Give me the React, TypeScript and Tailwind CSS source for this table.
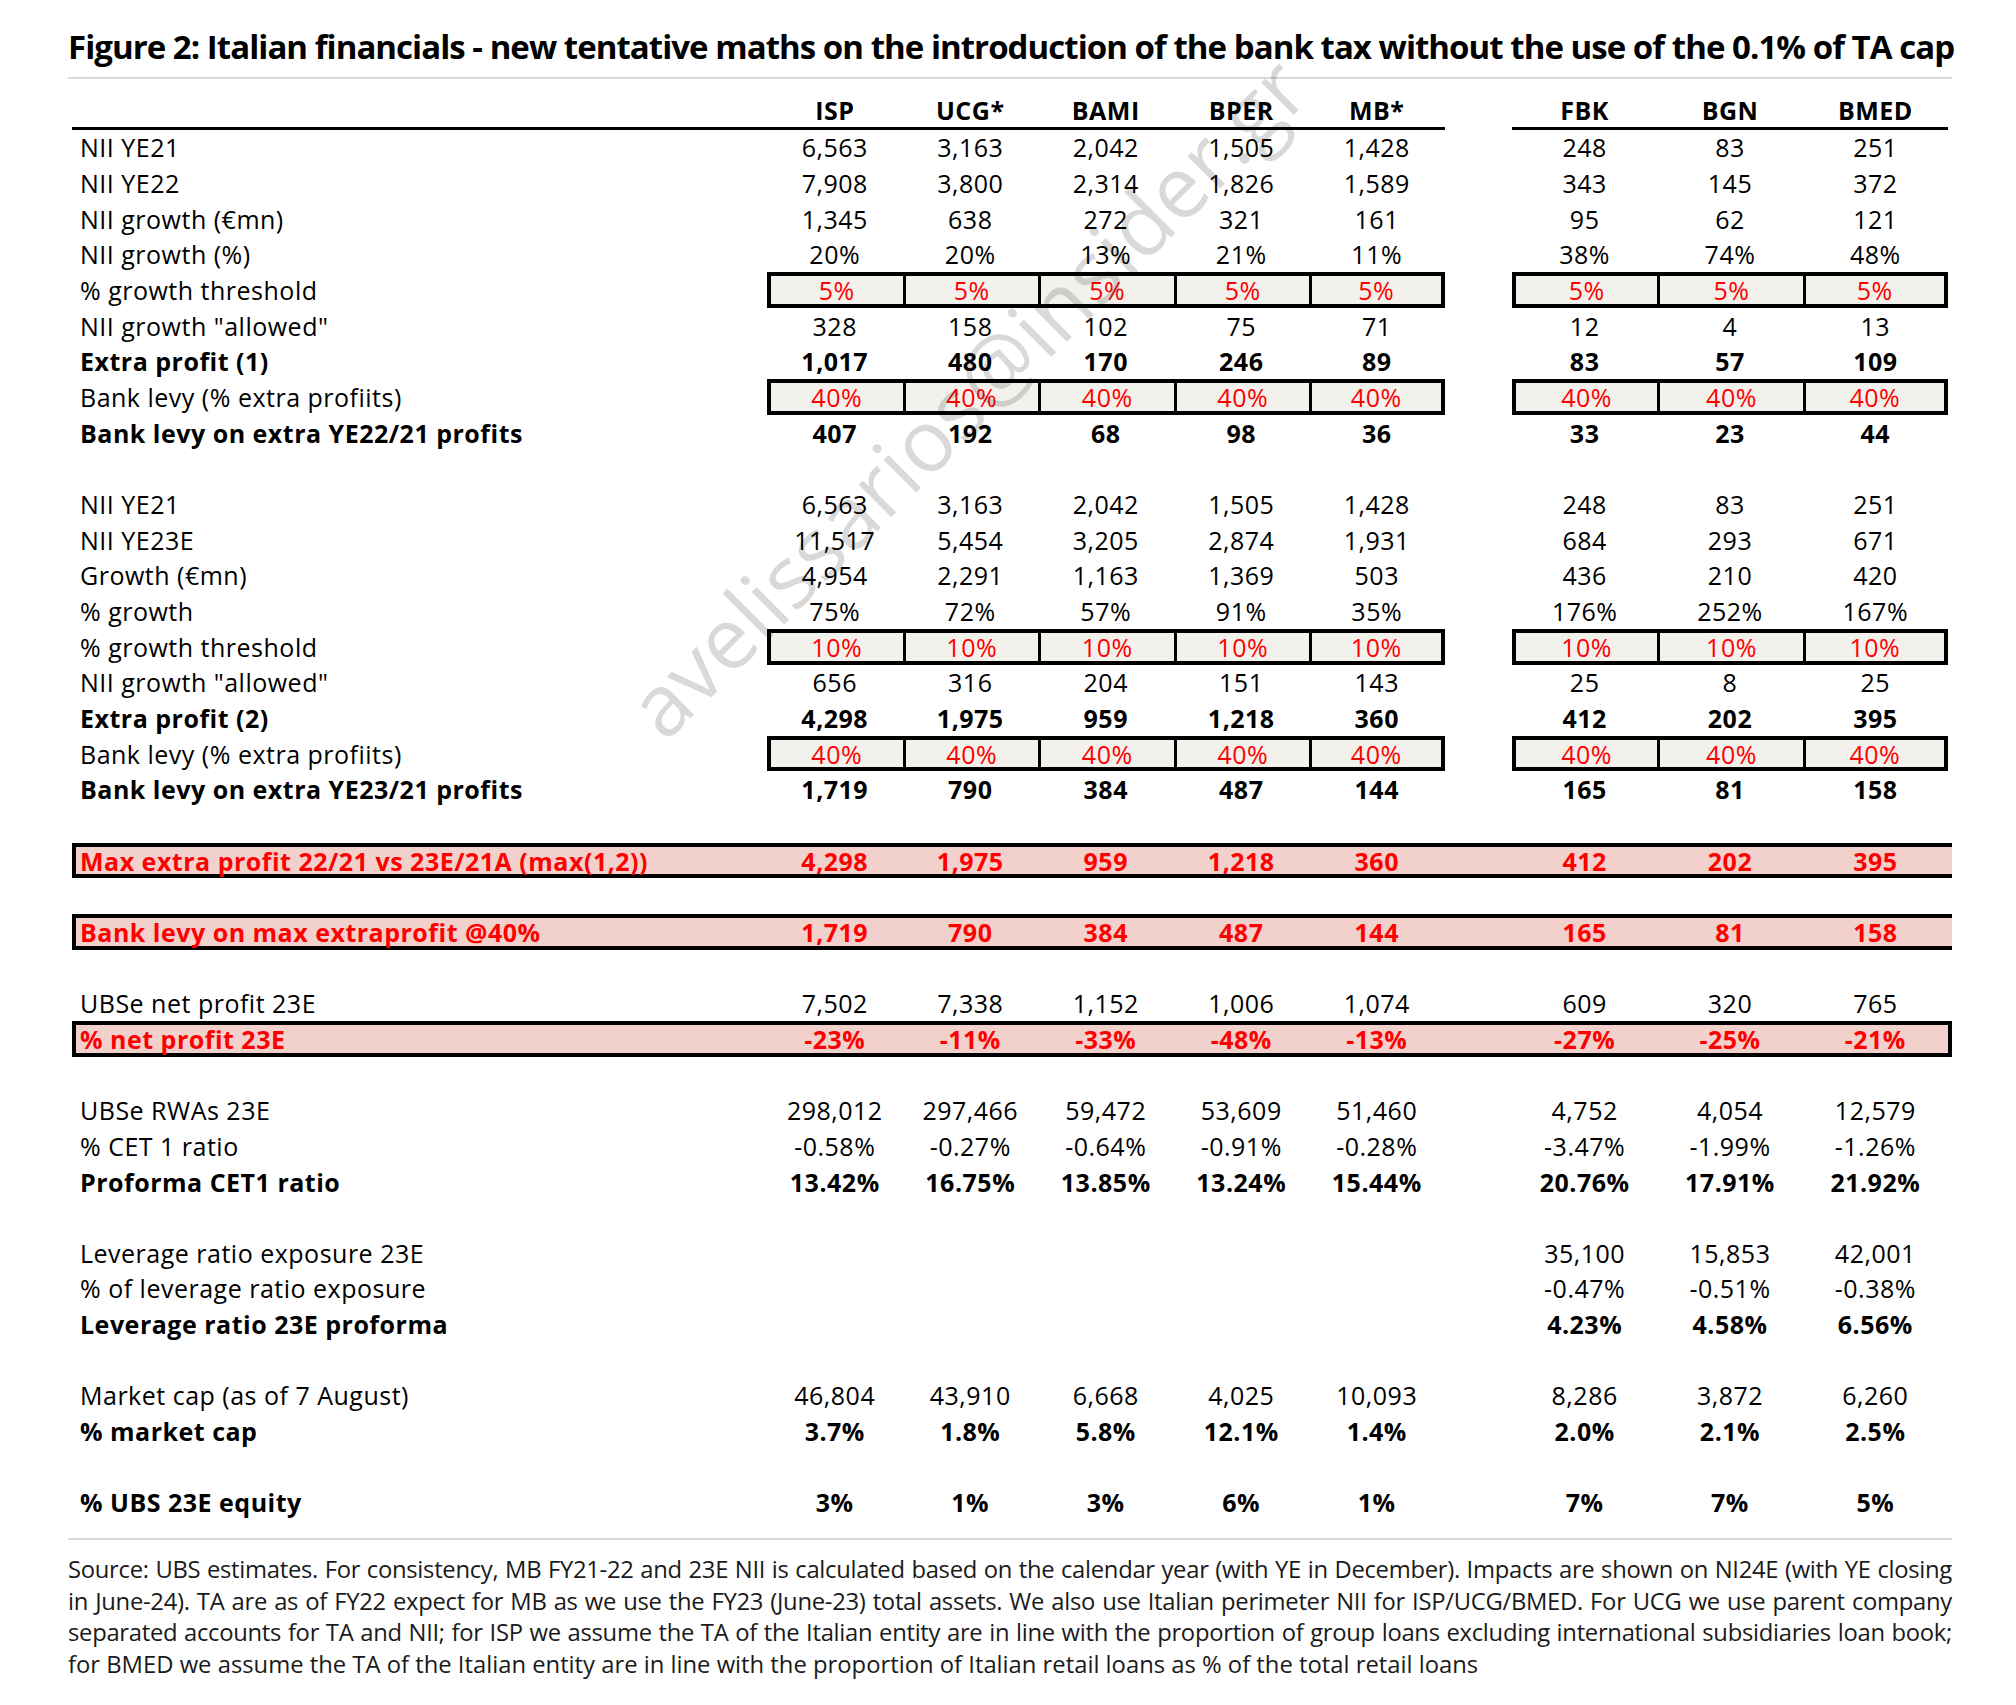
import React from "react";

type Kind = "normal" | "bold" | "input" | "blank" | "hl" | "hlbox";

type Row = {
  label?: string;
  left?: string[];
  right?: string[];
  kind: Kind;
};

const leftHeads = ["ISP", "UCG*", "BAMI", "BPER", "MB*"];
const rightHeads = ["FBK", "BGN", "BMED"];

const rows: Row[] = [
  { label: "NII YE21", left: ["6,563", "3,163", "2,042", "1,505", "1,428"], right: ["248", "83", "251"], kind: "normal" },
  { label: "NII YE22", left: ["7,908", "3,800", "2,314", "1,826", "1,589"], right: ["343", "145", "372"], kind: "normal" },
  { label: "NII growth (€mn)", left: ["1,345", "638", "272", "321", "161"], right: ["95", "62", "121"], kind: "normal" },
  { label: "NII growth (%)", left: ["20%", "20%", "13%", "21%", "11%"], right: ["38%", "74%", "48%"], kind: "normal" },
  { label: "% growth threshold", left: ["5%", "5%", "5%", "5%", "5%"], right: ["5%", "5%", "5%"], kind: "input" },
  { label: 'NII growth  "allowed"', left: ["328", "158", "102", "75", "71"], right: ["12", "4", "13"], kind: "normal" },
  { label: "Extra profit (1)", left: ["1,017", "480", "170", "246", "89"], right: ["83", "57", "109"], kind: "bold" },
  { label: "Bank levy (% extra profiits)", left: ["40%", "40%", "40%", "40%", "40%"], right: ["40%", "40%", "40%"], kind: "input" },
  { label: "Bank levy on extra YE22/21 profits", left: ["407", "192", "68", "98", "36"], right: ["33", "23", "44"], kind: "bold" },
  { kind: "blank" },
  { label: "NII YE21", left: ["6,563", "3,163", "2,042", "1,505", "1,428"], right: ["248", "83", "251"], kind: "normal" },
  { label: "NII YE23E", left: ["11,517", "5,454", "3,205", "2,874", "1,931"], right: ["684", "293", "671"], kind: "normal" },
  { label: "Growth (€mn)", left: ["4,954", "2,291", "1,163", "1,369", "503"], right: ["436", "210", "420"], kind: "normal" },
  { label: "% growth", left: ["75%", "72%", "57%", "91%", "35%"], right: ["176%", "252%", "167%"], kind: "normal" },
  { label: "% growth threshold", left: ["10%", "10%", "10%", "10%", "10%"], right: ["10%", "10%", "10%"], kind: "input" },
  { label: 'NII growth  "allowed"', left: ["656", "316", "204", "151", "143"], right: ["25", "8", "25"], kind: "normal" },
  { label: "Extra profit (2)", left: ["4,298", "1,975", "959", "1,218", "360"], right: ["412", "202", "395"], kind: "bold" },
  { label: "Bank levy (% extra profiits)", left: ["40%", "40%", "40%", "40%", "40%"], right: ["40%", "40%", "40%"], kind: "input" },
  { label: "Bank levy on extra YE23/21 profits", left: ["1,719", "790", "384", "487", "144"], right: ["165", "81", "158"], kind: "bold" },
  { kind: "blank" },
  { label: "Max extra profit 22/21 vs 23E/21A (max(1,2))", left: ["4,298", "1,975", "959", "1,218", "360"], right: ["412", "202", "395"], kind: "hl" },
  { kind: "blank" },
  { label: "Bank levy on max extraprofit @40%", left: ["1,719", "790", "384", "487", "144"], right: ["165", "81", "158"], kind: "hl" },
  { kind: "blank" },
  { label: "UBSe net profit 23E", left: ["7,502", "7,338", "1,152", "1,006", "1,074"], right: ["609", "320", "765"], kind: "normal" },
  { label: "% net profit 23E", left: ["-23%", "-11%", "-33%", "-48%", "-13%"], right: ["-27%", "-25%", "-21%"], kind: "hlbox" },
  { kind: "blank" },
  { label: "UBSe RWAs 23E", left: ["298,012", "297,466", "59,472", "53,609", "51,460"], right: ["4,752", "4,054", "12,579"], kind: "normal" },
  { label: "% CET 1 ratio", left: ["-0.58%", "-0.27%", "-0.64%", "-0.91%", "-0.28%"], right: ["-3.47%", "-1.99%", "-1.26%"], kind: "normal" },
  { label: "Proforma CET1 ratio", left: ["13.42%", "16.75%", "13.85%", "13.24%", "15.44%"], right: ["20.76%", "17.91%", "21.92%"], kind: "bold" },
  { kind: "blank" },
  { label: "Leverage ratio exposure 23E", right: ["35,100", "15,853", "42,001"], kind: "normal" },
  { label: "% of leverage ratio exposure", right: ["-0.47%", "-0.51%", "-0.38%"], kind: "normal" },
  { label: "Leverage ratio 23E proforma", right: ["4.23%", "4.58%", "6.56%"], kind: "bold" },
  { kind: "blank" },
  { label: "Market cap (as of 7 August)", left: ["46,804", "43,910", "6,668", "4,025", "10,093"], right: ["8,286", "3,872", "6,260"], kind: "normal" },
  { label: "% market cap", left: ["3.7%", "1.8%", "5.8%", "12.1%", "1.4%"], right: ["2.0%", "2.1%", "2.5%"], kind: "bold" },
  { kind: "blank" },
  { label: "% UBS 23E equity", left: ["3%", "1%", "3%", "6%", "1%"], right: ["7%", "7%", "5%"], kind: "bold" },
];

// label col + 5 left banks + gap + 3 right banks
const GRID =
  "grid grid-cols-[695px_repeat(5,135.5px)_67.5px_repeat(3,145.33px)] grid-rows-[35.66px] h-[35.66px]";

const InputCells = ({ values, groupSize }: { values: string[]; groupSize: number }) => (
  <>
    {values.map((v, i) => (
      <div
        key={i}
        className={`flex items-center justify-center bg-[#f3f1ec] text-[#ff0000] border-y-4 border-black ${
          i === 0 ? "border-l-4" : "border-l-[3px]"
        } ${i === groupSize - 1 ? "border-r-4" : ""}`}
      >
        {v}
      </div>
    ))}
  </>
);

const PlainCells = ({ values, count }: { values?: string[]; count: number }) => (
  <>
    {Array.from({ length: count }).map((_, i) => (
      <div key={i} className="flex items-center justify-center">
        {values ? values[i] : ""}
      </div>
    ))}
  </>
);

const TableRow = ({ row }: { row: Row }) => {
  if (row.kind === "blank") return <div className="h-[35.66px]" />;

  if (row.kind === "input") {
    return (
      <div className={GRID}>
        <div className="flex items-center pl-2 whitespace-nowrap">{row.label}</div>
        <InputCells values={row.left!} groupSize={5} />
        <div />
        <InputCells values={row.right!} groupSize={3} />
      </div>
    );
  }

  const hl = row.kind === "hl" || row.kind === "hlbox";
  const rowCls = hl
    ? row.kind === "hlbox"
      ? "bg-[#f2d1cd] text-[#ff0000] font-bold shadow-[inset_4px_0_0_0_#000,inset_-4px_0_0_0_#000,inset_0_4px_0_0_#000,inset_0_-4px_0_0_#000]"
      : "bg-[#f2d1cd] text-[#ff0000] font-bold shadow-[inset_4px_0_0_0_#000,inset_0_4px_0_0_#000,inset_0_-4px_0_0_#000]"
    : row.kind === "bold"
    ? "font-bold"
    : "";

  return (
    <div className={`${GRID} ${rowCls}`}>
      <div className="flex items-center pl-2 whitespace-nowrap">{row.label}</div>
      <PlainCells values={row.left} count={5} />
      <div />
      <PlainCells values={row.right} count={3} />
    </div>
  );
};

const App: React.FC = () => {
  return (
    <div className="relative w-[2016px] h-[1705px] bg-white text-black font-['Open_Sans',sans-serif] overflow-hidden">
      <div className="pl-[68px] pr-[64px] pt-[26px]">
        <h1 className="text-[33px] leading-[42px] font-bold whitespace-nowrap tracking-[-0.029em]">
          Figure 2: Italian financials - new tentative maths on the introduction of the bank tax without the use of the 0.1% of TA cap
        </h1>
        <div className="mt-[9px] h-[2px] bg-[#d9d9d9]" />

        <div className="mt-[15px] ml-[4px] text-[25px] leading-[26px] tracking-[0.02em]">
          <div className={`${GRID} font-bold`}>
            <div className="border-b-[3px] border-black" />
            {leftHeads.map((h) => (
              <div key={h} className="flex items-center justify-center border-b-[3px] border-black">
                {h}
              </div>
            ))}
            <div />
            {rightHeads.map((h) => (
              <div key={h} className="flex items-center justify-center border-b-[3px] border-black">
                {h}
              </div>
            ))}
          </div>
          {rows.map((r, i) => (
            <TableRow key={i} row={r} />
          ))}
        </div>

        <div className="mt-[18px] h-[2px] bg-[#d9d9d9]" />

        <div className="mt-[14px] w-[1884px] text-[23.8px] leading-[31.5px] text-[#1a1a1a]">
          <p className="text-justify [text-align-last:justify] whitespace-nowrap tracking-[-0.012em]">
            Source: UBS estimates. For consistency, MB FY21-22 and 23E NII is calculated based on the calendar year (with YE in December). Impacts are shown on NI24E (with YE closing
          </p>
          <p className="text-justify [text-align-last:justify] whitespace-nowrap tracking-[-0.012em]">
            in June-24). TA are as of FY22 expect for MB as we use the FY23 (June-23) total assets. We also use Italian perimeter NII for ISP/UCG/BMED. For UCG we use parent company
          </p>
          <p className="text-justify [text-align-last:justify] whitespace-nowrap tracking-[-0.012em]">
            separated accounts for TA and NII; for ISP we assume the TA of the Italian entity are in line with the proportion of group loans excluding international subsidiaries loan book;
          </p>
          <p className="whitespace-nowrap">
            for BMED we assume the TA of the Italian entity are in line with the proportion of Italian retail loans as % of the total retail loans
          </p>
        </div>
      </div>

      <div className="pointer-events-none absolute left-[966px] top-[396px] -translate-x-1/2 -translate-y-1/2 -rotate-45 text-[86px] leading-none whitespace-nowrap text-black/15">
        avelissarios@insider.gr
      </div>
    </div>
  );
};

export default App;
